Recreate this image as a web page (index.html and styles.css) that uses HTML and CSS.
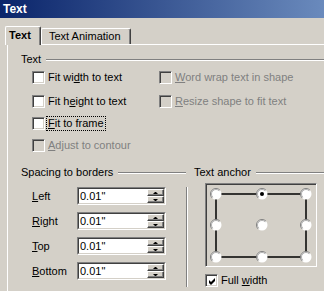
FILE: index.html
```html
<!DOCTYPE html>
<html lang="en">
<head>
    <meta charset="UTF-8">
    <title>Text</title>
    <link rel="stylesheet" href="styles.css">
</head>
<body>
    <div class="titlebar">Text</div>

    <div class="dialog">
        <div class="tabs">
            <div class="tab active">Text</div>
            <div class="tab">Text Animation</div>
        </div>

        <div class="panel">
            <div class="legend">Text</div>
            <div class="checks">
                <label class="check"><span class="cb"></span><span>Fit wi<u>d</u>th to text</span></label>
                <label class="check disabled"><span class="cb"></span><span><u>W</u>ord wrap text in shape</span></label>
                <label class="check"><span class="cb"></span><span>Fit h<u>e</u>ight to text</span></label>
                <label class="check disabled"><span class="cb"></span><span><u>R</u>esize shape to fit text</span></label>
                <label class="check"><span class="cb"></span><span class="focus"><u>F</u>it to frame</span></label>
                <span></span>
                <label class="check disabled"><span class="cb"></span><span><u>A</u>djust to contour</span></label>
            </div>

            <div class="lower">
                <div class="col-left">
                    <div class="legend">Spacing to borders</div>
                    <div class="fields">
                        <div class="field-row">
                            <span class="field-label"><u>L</u>eft</span>
                            <div class="spin"><div class="spin-in">
                                <span class="value">0.01"</span>
                                <span class="btns"><span class="btn"><i class="up"></i></span><span class="btn"><i class="down"></i></span></span>
                            </div></div>
                        </div>
                        <div class="field-row">
                            <span class="field-label"><u>R</u>ight</span>
                            <div class="spin"><div class="spin-in">
                                <span class="value">0.01"</span>
                                <span class="btns"><span class="btn"><i class="up"></i></span><span class="btn"><i class="down"></i></span></span>
                            </div></div>
                        </div>
                        <div class="field-row">
                            <span class="field-label"><u>T</u>op</span>
                            <div class="spin"><div class="spin-in">
                                <span class="value">0.01"</span>
                                <span class="btns"><span class="btn"><i class="up"></i></span><span class="btn"><i class="down"></i></span></span>
                            </div></div>
                        </div>
                        <div class="field-row">
                            <span class="field-label"><u>B</u>ottom</span>
                            <div class="spin"><div class="spin-in">
                                <span class="value">0.01"</span>
                                <span class="btns"><span class="btn"><i class="up"></i></span><span class="btn"><i class="down"></i></span></span>
                            </div></div>
                        </div>
                    </div>
                </div>

                <div class="vsep"></div>

                <div class="col-right">
                    <div class="legend anchor-legend">Text anchor</div>
                    <div class="anchor">
                        <svg width="108" height="80" viewBox="0 0 108 80">
                            <defs>
                                <g id="radio">
                                    <circle r="5.5" fill="#fff"/>
                                    <path d="M-3.9 3.9 A5.5 5.5 0 0 1 3.9 -3.9" stroke="#808080" fill="none"/>
                                    <path d="M-3.2 3.2 A4.5 4.5 0 0 1 3.2 -3.2" stroke="#b0b0b0" fill="none"/>
                                </g>
                            </defs>
                            <rect x="9" y="9" width="90" height="63" stroke="#000" stroke-width="1.5" fill="none"/>
                            <use href="#radio" x="9" y="9"/>
                            <use href="#radio" x="55" y="9"/>
                            <use href="#radio" x="99" y="9"/>
                            <use href="#radio" x="9" y="40"/>
                            <use href="#radio" x="55" y="40"/>
                            <use href="#radio" x="99" y="40"/>
                            <use href="#radio" x="9" y="72"/>
                            <use href="#radio" x="55" y="72"/>
                            <use href="#radio" x="99" y="72"/>
                            <circle cx="55" cy="9" r="2" fill="#000"/>
                        </svg>
                    </div>
                    <label class="check full"><span class="cb"><svg width="9" height="9" viewBox="0 0 9 9"><polygon points="1,3 3,5 7,1 7,4 3,8 1,6" fill="#000"/></svg></span><span>Full <u>w</u>idth</span></label>
                </div>
            </div>
        </div>
    </div>
</body>
</html>
```

FILE: styles.css
```css
body {
    margin: 0;
    width: 324px;
    height: 291px;
    overflow: hidden;
    background: #d4d0c8;
    font: 11px "Liberation Sans", Arial, sans-serif;
    color: #000;
}
u {
    text-decoration: underline;
}
.titlebar {
    height: 18px;
    line-height: 18px;
    padding-left: 3px;
    background: linear-gradient(to right, #0a246a, #a6caf0) 0 0 / 527px 100% no-repeat;
    color: #fff;
    font-weight: bold;
    font-size: 12px;
}
.dialog {
    padding: 8px 0 0 7px;
}
.tabs {
    display: flex;
    align-items: flex-end;
    height: 18px;
}
.tab {
    box-sizing: border-box;
    height: 16px;
    line-height: 14px;
    padding: 0 8px 0 7px;
    width: 90px;
    border-top: 1px solid #fff;
    border-left: 1px solid #fff;
    border-right: 1px solid #404040;
    box-shadow: inset -1px 0 #808080;
    border-radius: 2px 2px 0 0;
}
.tab.active {
    position: relative;
    z-index: 1;
    height: 19px;
    width: 36px;
    margin: 0 0 -1px -2px;
    padding: 1px 0 0 3px;
    font-weight: bold;
    background: #d4d0c8;
}
.panel {
    box-sizing: border-box;
    height: 247px;
    overflow: hidden;
    padding-top: 8px;
    border-top: 1px solid #fff;
    border-left: 1px solid #fff;
}
.legend {
    display: flex;
    align-items: center;
    height: 13px;
    line-height: 13px;
    padding-left: 13px;
    white-space: nowrap;
}
.legend::after {
    content: "";
    flex: 1;
    margin: 1px 0 0 5px;
    border-top: 1px solid #808080;
    border-bottom: 1px solid #fff;
}
.checks {
    display: grid;
    grid-template-columns: 127px auto;
    row-gap: 9px;
    margin-top: 5px;
    padding-left: 24px;
}
.checks .check:first-child,
.checks .check:nth-child(2) {
    margin-bottom: 2px;
}
.check {
    display: flex;
    align-items: center;
    gap: 3px;
    height: 13px;
    line-height: 13px;
    white-space: nowrap;
}
.check.disabled {
    color: #808080;
}
.cb {
    box-sizing: border-box;
    width: 13px;
    height: 13px;
    flex: none;
    border: 1px solid;
    border-color: #808080 #fff #fff #808080;
    box-shadow: inset 1px 1px #404040, inset -1px -1px #d4d0c8;
    background: #fff;
    display: flex;
    align-items: center;
    justify-content: center;
}
.disabled .cb {
    background: #d4d0c8;
}
.cb svg {
    display: block;
    margin: 1px 0 0 1px;
}
.focus {
    outline: 1px dotted #000;
    padding: 0 1px;
    margin-left: -1px;
}
.lower {
    display: flex;
    margin-top: 14px;
}
.col-left {
    width: 178px;
}
.fields {
    display: flex;
    flex-direction: column;
    gap: 7px;
    margin-top: 8px;
    padding-left: 24px;
}
.field-row {
    display: flex;
    align-items: center;
}
.field-label {
    width: 45px;
}
.spin {
    box-sizing: border-box;
    width: 89px;
    height: 18px;
    border: 1px solid;
    border-color: #808080 #fff #fff #808080;
}
.spin-in {
    display: flex;
    height: 100%;
    box-sizing: border-box;
    border: 1px solid;
    border-color: #404040 #d4d0c8 #d4d0c8 #404040;
    background: #fff;
}
.value {
    flex: 1;
    padding-left: 1px;
    line-height: 14px;
}
.btns {
    display: flex;
    flex-direction: column;
    width: 17px;
}
.btn {
    flex: 1;
    display: flex;
    align-items: center;
    justify-content: center;
    background: #d4d0c8;
    border-top: 1px solid #fff;
    border-left: 1px solid #fff;
    border-right: 1px solid #404040;
    border-bottom: 1px solid #404040;
    box-shadow: inset -1px -1px #808080;
}
.btn i {
    width: 1px;
    height: 0;
    border-left: 2px solid transparent;
    border-right: 2px solid transparent;
}
.btn .up {
    border-bottom: 2px solid #000;
}
.btn .down {
    border-top: 2px solid #000;
}
.vsep {
    width: 0;
    margin-top: 21px;
    border-left: 1px solid #808080;
    border-right: 1px solid #fff;
}
.col-right {
    flex: 1;
}
.anchor-legend {
    padding-left: 6px;
}
.anchor {
    box-sizing: border-box;
    width: 112px;
    height: 84px;
    margin: 4px 0 0 17px;
    border: 1px solid;
    border-color: #808080 #fff #fff #808080;
    box-shadow: inset 1px 1px #404040, inset -1px -1px #d4d0c8;
    padding: 1px;
}
.anchor svg {
    display: block;
}
.check.full {
    margin: 7px 0 0 17px;
}
```
